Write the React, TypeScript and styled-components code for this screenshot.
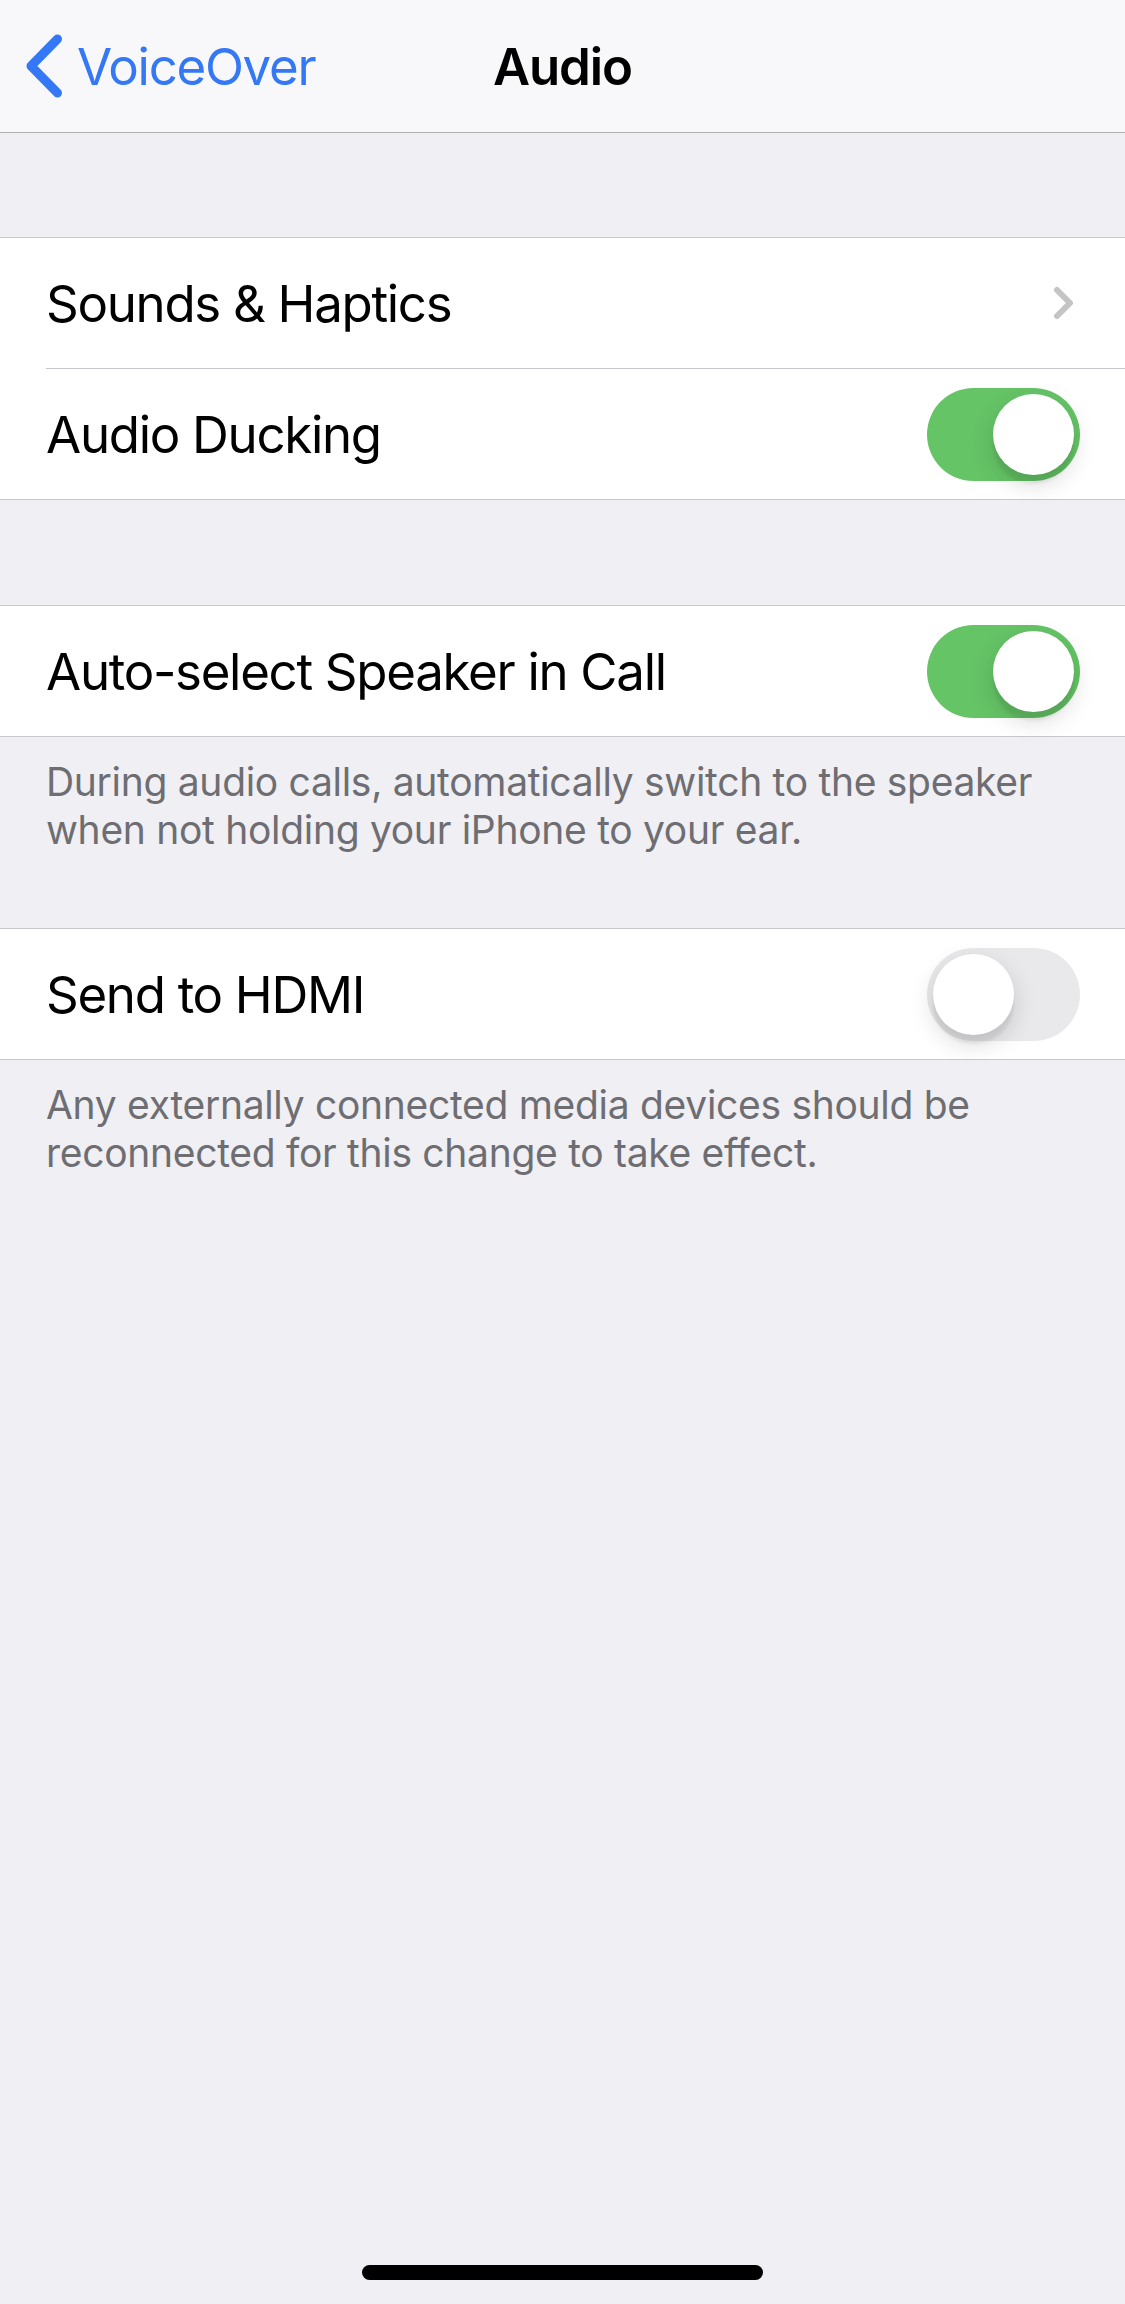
import React from "react";
import styled, { createGlobalStyle } from "styled-components";

const GlobalStyle = createGlobalStyle`
  html, body {
    margin: 0;
    padding: 0;
    background: #efeff4;
  }
  body {
    font-family: Inter, "Noto Sans", "Liberation Sans", sans-serif;
    -webkit-font-smoothing: antialiased;
  }
  * { box-sizing: border-box; }
`;

const Screen = styled.div`
  width: 1125px;
  min-height: 2304px;
  display: flex;
  flex-direction: column;
  background: #efeff4;
`;

const NavBar = styled.header`
  height: 133px;
  background: #f8f8fa;
  border-bottom: 1px solid #b1b1b4;
  display: grid;
  grid-template-columns: 1fr auto 1fr;
  align-items: center;
`;

const BackButton = styled.button`
  justify-self: start;
  display: flex;
  align-items: center;
  gap: 14px;
  padding: 0 0 0 26px;
  margin: 0;
  border: none;
  background: transparent;
  color: #3478f6;
  font-family: inherit;
  font-size: 51px;
  letter-spacing: -1.3px;
  line-height: 1;
  cursor: pointer;
`;

const NavTitle = styled.h1`
  margin: 0;
  font-size: 51px;
  font-weight: 600;
  letter-spacing: -1.1px;
  color: #000;
  line-height: 1;
`;

const SectionGap = styled.div<{ $h: number }>`
  height: ${(p) => p.$h}px;
`;

const Section = styled.section`
  background: #fff;
  border-top: 1px solid #c8c7cc;
  border-bottom: 1px solid #c8c7cc;
`;

const Row = styled.div<{ $divider?: boolean }>`
  height: ${(p) => (p.$divider ? 131 : 130)}px;
  margin-left: 46px;
  padding-right: 45px;
  display: flex;
  align-items: center;
  justify-content: space-between;
  border-bottom: ${(p) => (p.$divider ? "1px solid #c8c7cc" : "none")};
`;

const Label = styled.span`
  font-size: 51px;
  letter-spacing: -1.3px;
  color: #000;
  line-height: 1;
`;

const Footer = styled.p`
  margin: 0;
  padding: 21px 46px 0 46px;
  height: 191px;
  font-size: 39px;
  line-height: 48px;
  letter-spacing: -0.3px;
  color: #6d6d72;
`;

const Track = styled.button<{ $on: boolean }>`
  width: 153px;
  height: 93px;
  border-radius: 47px;
  border: none;
  padding: 6px;
  display: flex;
  align-items: center;
  justify-content: ${(p) => (p.$on ? "flex-end" : "flex-start")};
  background: ${(p) => (p.$on ? "#65c466" : "#e9e9eb")};
  cursor: pointer;
`;

const Knob = styled.span`
  width: 81px;
  height: 81px;
  border-radius: 50%;
  background: #fff;
  box-shadow: 0 9px 24px rgba(0, 0, 0, 0.15), 0 9px 3px rgba(0, 0, 0, 0.06);
`;

const DisclosureIcon = styled.svg`
  margin-right: 5px;
`;

const HomeBar = styled.div`
  margin-top: auto;
  padding-bottom: 24px;
  display: flex;
  justify-content: center;
`;

const HomeIndicator = styled.div`
  width: 401px;
  height: 15px;
  border-radius: 8px;
  background: #000;
`;

const Toggle = ({ on }: { on: boolean }) => (
  <Track $on={on} aria-pressed={on}>
    <Knob />
  </Track>
);

const BackChevron = () => (
  <svg width="37" height="64" viewBox="0 0 37 64" aria-hidden>
    <polyline
      points="31.5,5 5,32 31.5,59"
      fill="none"
      stroke="#3478f6"
      strokeWidth="9"
      strokeLinecap="round"
      strokeLinejoin="round"
    />
  </svg>
);

const Disclosure = () => (
  <DisclosureIcon width="22" height="34" viewBox="0 0 22 34" aria-hidden>
    <polyline
      points="4,4 17,17 4,30"
      fill="none"
      stroke="#c4c4c7"
      strokeWidth="6"
      strokeLinecap="round"
      strokeLinejoin="round"
    />
  </DisclosureIcon>
);

export default function App() {
  return (
    <>
      <GlobalStyle />
      <Screen>
        <NavBar>
          <BackButton>
            <BackChevron />
            <span>VoiceOver</span>
          </BackButton>
          <NavTitle>Audio</NavTitle>
          <div />
        </NavBar>

        <SectionGap $h={104} />
        <Section>
          <Row $divider>
            <Label>Sounds &amp; Haptics</Label>
            <Disclosure />
          </Row>
          <Row>
            <Label>Audio Ducking</Label>
            <Toggle on />
          </Row>
        </Section>

        <SectionGap $h={105} />
        <Section>
          <Row>
            <Label>Auto-select Speaker in Call</Label>
            <Toggle on />
          </Row>
        </Section>
        <Footer>
          During audio calls, automatically switch to the speaker when not
          holding your iPhone to your ear.
        </Footer>

        <Section>
          <Row>
            <Label>Send to HDMI</Label>
            <Toggle on={false} />
          </Row>
        </Section>
        <Footer>
          Any externally connected media devices should be reconnected for this
          change to take effect.
        </Footer>

        <HomeBar>
          <HomeIndicator />
        </HomeBar>
      </Screen>
    </>
  );
}
